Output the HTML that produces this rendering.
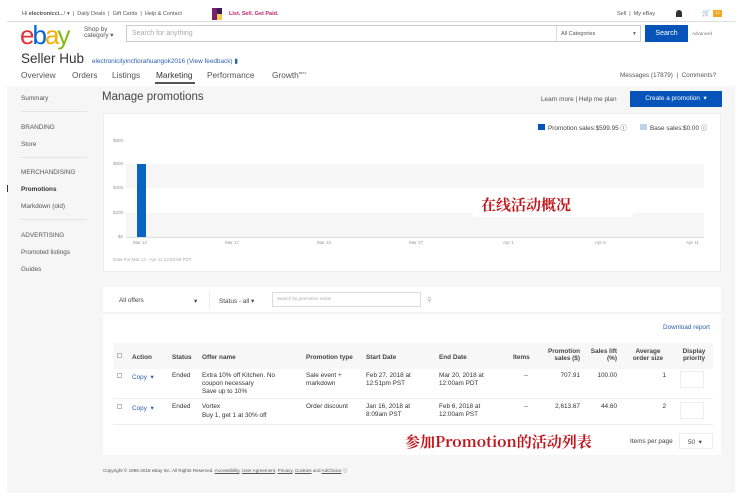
<!DOCTYPE html>
<html><head><meta charset="utf-8"><style>
*{margin:0;padding:0;box-sizing:border-box}
body{width:741px;height:500px;background:#fff;font-family:"Liberation Sans",Arial,sans-serif;color:#333;position:relative;overflow:hidden}
.a{position:absolute;white-space:nowrap}
.s5{font-size:5.5px}.s6{font-size:6.4px}.s7{font-size:7px}.s8{font-size:8.3px}
.blue{color:#2c5fb3}
.gray{color:#888}
.cn{font-family:'Noto Serif CJK SC','Liberation Serif',serif;font-weight:bold;color:#c0161c}
</style></head><body>
<div class="a s5" style="left:22px;top:11px;color:#555">Hi <b>electronicci...</b>! ▾ &nbsp;| &nbsp;Daily Deals &nbsp;| &nbsp;Gift Cards &nbsp;| &nbsp;Help &amp; Contact</div>
<div class="a" style="left:212px;top:8px;width:5px;height:12px;background:#7b1e6e"></div>
<div class="a" style="left:217px;top:8px;width:5px;height:6px;background:#3b1c5a"></div>
<div class="a" style="left:217px;top:14px;width:5px;height:6px;background:#f2c94c"></div>
<div class="a s5" style="left:229px;top:11px;color:#c0246a;font-weight:bold">List. Sell. Get Paid.</div>
<div class="a s5" style="left:617px;top:11px;color:#555">Sell &nbsp;| &nbsp;My eBay</div>
<div class="a" style="left:676px;top:10px;width:6px;height:7px;background:#333;border-radius:3px 3px 0 0"></div>
<div class="a s6" style="left:702px;top:9px;color:#555">🛒</div>
<div class="a" style="left:713px;top:10px;width:9px;height:7px;background:#f5a623;font-size:4px;color:#fff;text-align:center">12</div>
<div class="a" style="left:7px;top:21px;width:728px;height:1px;background:#ddd"></div>
<div class="a" style="left:20px;top:20px;font-size:26px;letter-spacing:-2px"><span style="color:#e53238">e</span><span style="color:#0064d2">b</span><span style="color:#f5af02">a</span><span style="color:#86b817">y</span></div>
<div class="a s6" style="left:84px;top:27px;color:#555;line-height:6px">Shop by<br>category ▾</div>
<div class="a" style="left:126px;top:25px;width:515px;height:17px;border:1px solid #ccc"></div>
<div class="a s7" style="left:132px;top:30px;color:#aaa">Search for anything</div>
<div class="a" style="left:556px;top:26px;width:1px;height:15px;background:#ddd"></div>
<div class="a s5" style="left:561px;top:31px;color:#555">All Categories</div>
<div class="a s5" style="left:633px;top:31px;color:#555">▾</div>
<div class="a s7" style="left:645px;top:25px;width:43px;height:17px;background:#0654ba;color:#fff;text-align:center;line-height:17px">Search</div>
<div class="a" style="left:692px;top:31px;font-size:4.5px;color:#777">Advanced</div>
<div class="a" style="left:21px;top:51px;font-size:13.5px;color:#333">Seller Hub</div>
<div class="a s6" style="left:92px;top:57px"><span class="blue">electronicityincfiorahuangok2016 (View feedback)</span> <span style="color:#2c5fb3">▮</span></div>
<div class="a s8" style="left:21px;top:70px;color:#555">Overview</div>
<div class="a s8" style="left:72px;top:70px;color:#555">Orders</div>
<div class="a s8" style="left:112px;top:70px;color:#555">Listings</div>
<div class="a s8" style="left:156px;top:70px;color:#333">Marketing</div>
<div class="a" style="left:155px;top:82px;width:40px;height:2px;background:#555"></div>
<div class="a s8" style="left:207px;top:70px;color:#555">Performance</div>
<div class="a s8" style="left:272px;top:70px;color:#555">Growth<sup style="font-size:3px">BETA</sup></div>
<div class="a s6" style="left:620px;top:72px;color:#555">Messages (17879) &nbsp;| &nbsp;Comments?</div>
<div class="a" style="left:7px;top:86px;width:728px;height:407px;background:#f6f6f6"></div>
<div class="a s6" style="left:21px;top:95px;color:#555">Summary</div>
<div class="a" style="left:21px;top:111px;width:66px;height:1px;background:#e4e4e4"></div>
<div class="a s6" style="left:21px;top:124px;color:#555">BRANDING</div>
<div class="a s6" style="left:21px;top:141px;color:#555">Store</div>
<div class="a" style="left:21px;top:157px;width:66px;height:1px;background:#e4e4e4"></div>
<div class="a s6" style="left:21px;top:169px;color:#555">MERCHANDISING</div>
<div class="a" style="left:7px;top:185px;width:1px;height:7px;background:#333"></div>
<div class="a s6" style="left:21px;top:186px;color:#333;font-weight:bold">Promotions</div>
<div class="a s6" style="left:21px;top:203px;color:#555">Markdown (old)</div>
<div class="a" style="left:21px;top:219px;width:66px;height:1px;background:#e4e4e4"></div>
<div class="a s6" style="left:21px;top:232px;color:#555">ADVERTISING</div>
<div class="a s6" style="left:21px;top:249px;color:#555">Promoted listings</div>
<div class="a s6" style="left:21px;top:266px;color:#555">Guides</div>
<div class="a" style="left:102px;top:91px;font-size:11.5px;color:#444">Manage promotions</div>
<div class="a s6" style="left:541px;top:96px;color:#555">Learn more | Help me plan</div>
<div class="a s6" style="left:630px;top:91px;width:92px;height:16px;background:#0654ba;color:#fff;text-align:center;line-height:16px">Create a promotion &nbsp;▾</div>
<div class="a" style="left:103px;top:113px;width:618px;height:159px;background:#fff;border:1px solid #eee"></div>
<div class="a" style="left:538px;top:124px;width:7px;height:6px;background:#0654ba"></div>
<div class="a s6" style="left:548px;top:123px;color:#444">Promotion sales:$599.95 ⓘ</div>
<div class="a" style="left:640px;top:124px;width:7px;height:6px;background:#bcd3ea"></div>
<div class="a s6" style="left:650px;top:123px;color:#444">Base sales:$0.00 ⓘ</div>
<div class="a" style="left:126px;top:164px;width:578px;height:24px;background:#f6f6f6"></div>
<div class="a" style="left:126px;top:213px;width:578px;height:24px;background:#f6f6f6"></div>
<div class="a" style="left:126px;top:237px;width:578px;height:1px;background:#ddd"></div>
<div class="a" style="left:113px;top:138px;font-size:4.5px;color:#999">$800</div>
<div class="a" style="left:113px;top:161px;font-size:4.5px;color:#999">$600</div>
<div class="a" style="left:113px;top:185px;font-size:4.5px;color:#999">$400</div>
<div class="a" style="left:113px;top:210px;font-size:4.5px;color:#999">$200</div>
<div class="a" style="left:118px;top:234px;font-size:4.5px;color:#999">$0</div>
<div class="a" style="left:137px;top:164px;width:9px;height:73px;background:#0864c0"></div>
<div class="a" style="left:133px;top:240px;font-size:4.5px;color:#999">Mar 12</div>
<div class="a" style="left:225px;top:240px;font-size:4.5px;color:#999">Mar 17</div>
<div class="a" style="left:317px;top:240px;font-size:4.5px;color:#999">Mar 22</div>
<div class="a" style="left:409px;top:240px;font-size:4.5px;color:#999">Mar 27</div>
<div class="a" style="left:503px;top:240px;font-size:4.5px;color:#999">Apr 1</div>
<div class="a" style="left:595px;top:240px;font-size:4.5px;color:#999">Apr 6</div>
<div class="a" style="left:686px;top:240px;font-size:4.5px;color:#999">Apr 11</div>
<div class="a" style="left:113px;top:257px;font-size:4.5px;color:#aaa">Data For Mar 12 - Apr 11 23:59:59 PDT</div>
<div class="a" style="left:473px;top:191px;width:160px;height:26px;background:#fff"></div>
<div class="a cn" style="left:481px;top:194px;font-size:15px">在线活动概况</div>
<div class="a" style="left:103px;top:287px;width:618px;height:168px;background:#fff"></div>
<div class="a" style="left:103px;top:312px;width:618px;height:2px;background:#f3f3f3"></div>
<div class="a s6" style="left:119px;top:297px;color:#444">All offers</div>
<div class="a s6" style="left:194px;top:297px;color:#444">▾</div>
<div class="a" style="left:209px;top:290px;width:1px;height:20px;background:#eee"></div>
<div class="a s6" style="left:219px;top:297px;color:#444">Status - all ▾</div>
<div class="a" style="left:272px;top:292px;width:149px;height:15px;border:1px solid #ddd"></div>
<div class="a" style="left:277px;top:296px;font-size:4.5px;color:#aaa">Search by promotion name</div>
<div class="a s6" style="left:427px;top:296px;color:#aaa">⚲</div>
<div class="a s6 blue" style="left:663px;top:324px">Download report</div>
<div class="a" style="left:113px;top:343px;width:600px;height:26px;background:#f7f7f7"></div>
<div class="a" style="left:117px;top:353px;width:5px;height:5px;border:1px solid #bbb"></div>
<div class="a s6" style="left:132px;top:354px;font-weight:bold;color:#444">Action</div>
<div class="a s6" style="left:172px;top:354px;font-weight:bold;color:#444">Status</div>
<div class="a s6" style="left:202px;top:354px;font-weight:bold;color:#444">Offer name</div>
<div class="a s6" style="left:306px;top:354px;font-weight:bold;color:#444">Promotion type</div>
<div class="a s6" style="left:366px;top:354px;font-weight:bold;color:#444">Start Date</div>
<div class="a s6" style="left:439px;top:354px;font-weight:bold;color:#444">End Date</div>
<div class="a s6" style="left:513px;top:354px;font-weight:bold;color:#444">Items</div>
<div class="a s6" style="left:540px;top:348px;width:40px;text-align:right;font-weight:bold;color:#444;line-height:7px;white-space:normal">Promotion sales ($)</div>
<div class="a s6" style="left:590px;top:348px;width:27px;text-align:right;font-weight:bold;color:#444;line-height:7px;white-space:normal">Sales lift (%)</div>
<div class="a s6" style="left:630px;top:348px;width:36px;text-align:center;font-weight:bold;color:#444;line-height:7px;white-space:normal">Average order size</div>
<div class="a s6" style="left:678px;top:348px;width:32px;text-align:center;font-weight:bold;color:#444;line-height:7px;white-space:normal">Display priority</div>
<div class="a" style="left:117px;top:373px;width:5px;height:5px;border:1px solid #bbb"></div>
<div class="a s6 blue" style="left:132px;top:373px">Copy &nbsp;▾</div>
<div class="a s6" style="left:172px;top:372px">Ended</div>
<div class="a s6" style="left:202px;top:372px;line-height:8px">Extra 10% off Kitchen. No<br>coupon necessary<br>Save up to 10%</div>
<div class="a s6" style="left:306px;top:372px;line-height:8px">Sale event +<br>markdown</div>
<div class="a s6" style="left:366px;top:372px;line-height:8px">Feb 27, 2018 at<br>12:51pm PST</div>
<div class="a s6" style="left:439px;top:372px;line-height:8px">Mar 20, 2018 at<br>12:00am PDT</div>
<div class="a s6" style="left:524px;top:372px">--</div>
<div class="a s6" style="left:540px;top:372px;width:40px;text-align:right">707.91</div>
<div class="a s6" style="left:590px;top:372px;width:27px;text-align:right">100.00</div>
<div class="a s6" style="left:630px;top:372px;width:36px;text-align:right">1</div>
<div class="a" style="left:680px;top:371px;width:24px;height:17px;border:1px solid #eee"></div>
<div class="a" style="left:113px;top:398px;width:600px;height:1px;background:#eee"></div>
<div class="a" style="left:117px;top:404px;width:5px;height:5px;border:1px solid #bbb"></div>
<div class="a s6 blue" style="left:132px;top:404px">Copy &nbsp;▾</div>
<div class="a s6" style="left:172px;top:403px">Ended</div>
<div class="a s6" style="left:202px;top:403px;line-height:8.5px">Vortex<br>Buy 1, get 1 at 30% off</div>
<div class="a s6" style="left:306px;top:403px">Order discount</div>
<div class="a s6" style="left:366px;top:403px;line-height:8px">Jan 16, 2018 at<br>8:09am PST</div>
<div class="a s6" style="left:439px;top:403px;line-height:8px">Feb 6, 2018 at<br>12:00am PST</div>
<div class="a s6" style="left:524px;top:403px">--</div>
<div class="a s6" style="left:540px;top:403px;width:40px;text-align:right">2,613.67</div>
<div class="a s6" style="left:590px;top:403px;width:27px;text-align:right">44.60</div>
<div class="a s6" style="left:630px;top:403px;width:36px;text-align:right">2</div>
<div class="a" style="left:680px;top:402px;width:24px;height:17px;border:1px solid #eee"></div>
<div class="a" style="left:113px;top:424px;width:600px;height:1px;background:#eee"></div>
<div class="a cn" style="left:405px;top:431px;font-size:15px">参加Promotion的活动列表</div>
<div class="a s6" style="left:630px;top:438px;color:#444">Items per page</div>
<div class="a" style="left:679px;top:433px;width:34px;height:16px;border:1px solid #eee"></div>
<div class="a s6" style="left:688px;top:438px;color:#444">50 &nbsp;▾</div>
<div class="a" style="left:103px;top:468px;font-size:4.6px;color:#555">Copyright © 1995-2018 eBay Inc. All Rights Reserved. <u>Accessibility</u>, <u>User Agreement</u>, <u>Privacy</u>, <u>Cookies</u> and <u>AdChoice</u> ⓘ</div>
</body></html>
